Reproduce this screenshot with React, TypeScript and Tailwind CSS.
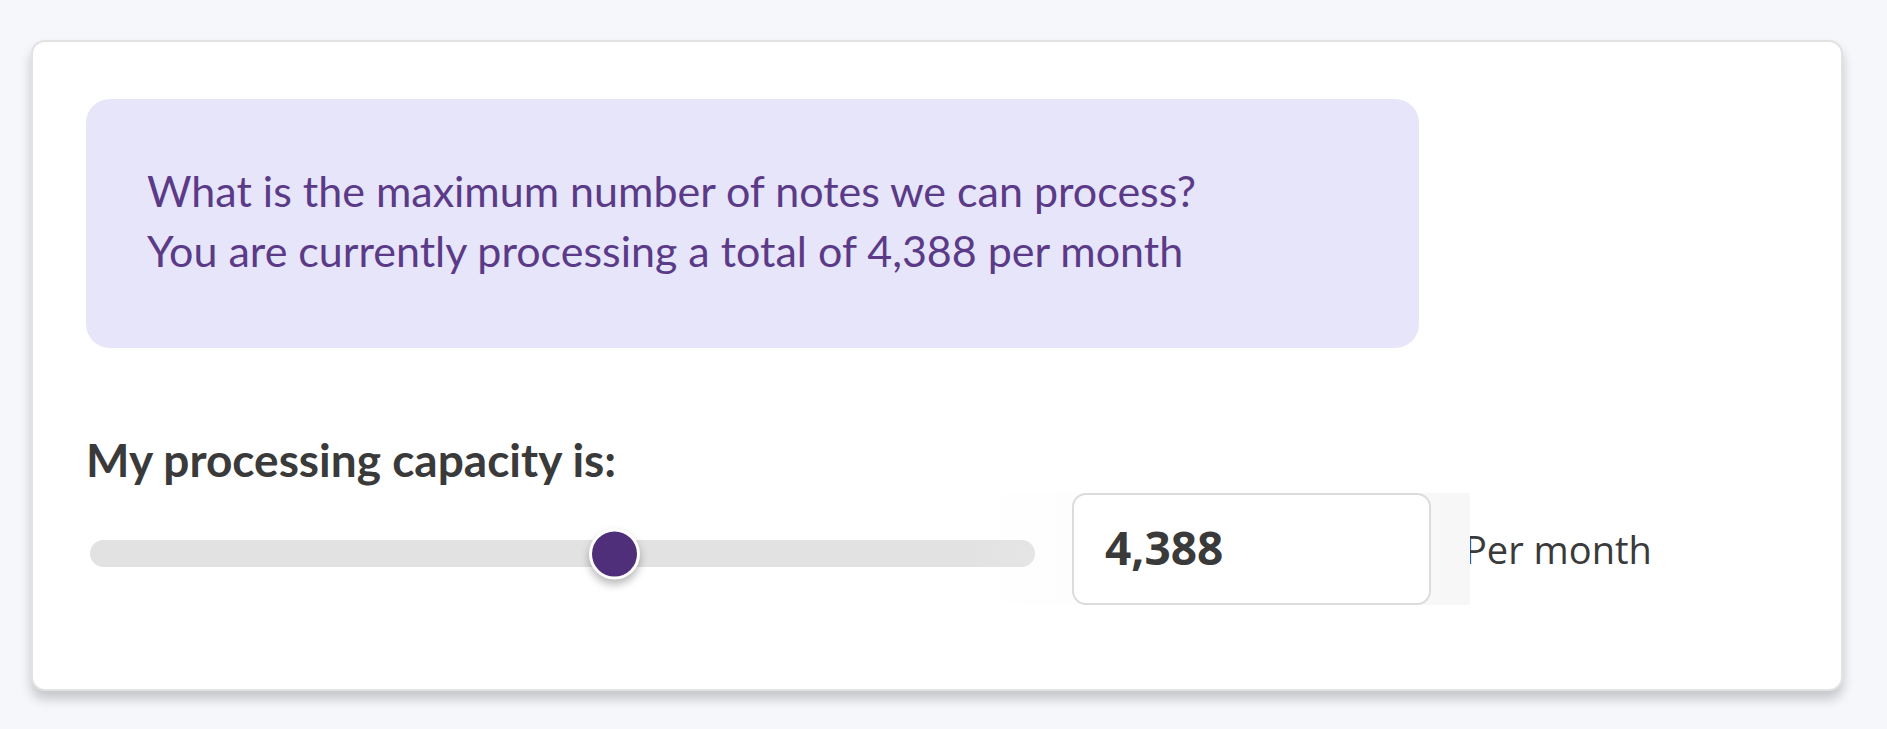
import React from "react";

export default function App() {
  return (
    <div className="min-h-screen w-full bg-[#f6f7fb] pt-[40px] pl-[31px] pr-[44px] pb-[38px]">
      <div className="h-[651px] rounded-[14px] border-2 border-[#e2e2e2] bg-white pl-[53px] pt-[57px] shadow-[0_8px_12px_rgba(0,0,0,0.2)]">
        <div className="w-[1333px] rounded-[24px] bg-[#e6e5fa] pl-[61px] pt-[62px] pb-[67px] font-['Lato',sans-serif] text-[43px] leading-[60px] text-[#5b3a87]">
          <p>What is the maximum number of notes we can process?</p>
          <p>You are currently processing a total of 4,388 per month</p>
        </div>
        <h2 className="mt-[84px] font-['Lato',sans-serif] text-[46px] font-bold leading-[56px] text-[#3a3a3a]">
          My processing capacity is:
        </h2>
        <div className="mt-[5px] flex items-start">
          <div className="relative ml-[4px] mt-[47px] h-[27px] w-[945px] rounded-full bg-[#e2e2e2]">
            <div className="absolute left-[499px] top-1/2 h-[51px] w-[51px] -translate-y-1/2 rounded-full border-[3px] border-white bg-[#4f2e7a] shadow-[0_5px_9px_rgba(0,0,0,0.28)]" />
          </div>
          <div className="relative ml-[37px]">
            <div className="absolute -left-[109px] -right-[39px] top-0 bottom-0 bg-gradient-to-r from-white/0 to-[#f7f7f7]" />
            <div className="relative flex h-[112px] w-[359px] items-center rounded-[14px] border-2 border-[#dcdcdc] bg-white pb-[4px] pl-[31px] font-['Open_Sans',sans-serif] text-[46px] font-bold text-[#3a3a3a]">
              4,388
            </div>
          </div>
          <div className="ml-[33px] flex h-[112px] items-center font-['Open_Sans',sans-serif] text-[38px] text-[#3a3a3a]">
            Per month
          </div>
        </div>
      </div>
    </div>
  );
}
